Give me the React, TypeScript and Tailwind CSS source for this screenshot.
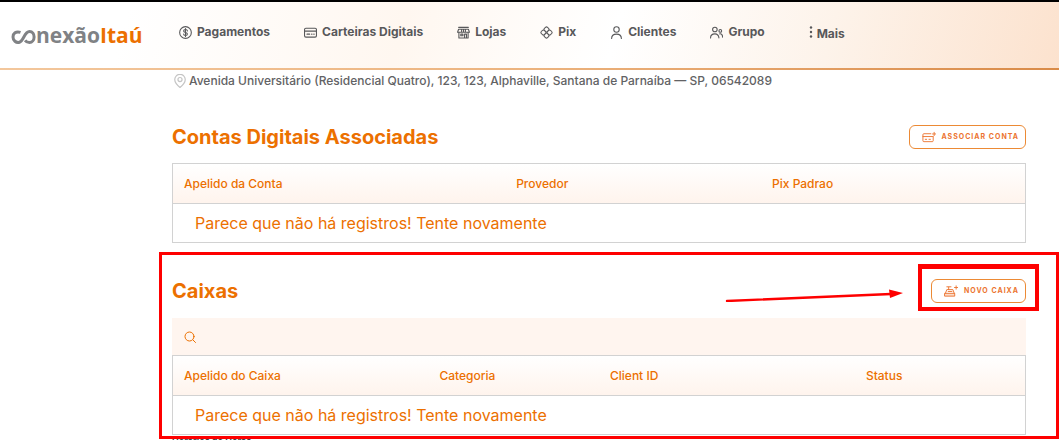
import type { ReactNode } from "react";

type IconProps = { className?: string };

function Svg({ className, children, box = "0 0 24 24" }: IconProps & { children: ReactNode; box?: string }) {
  return (
    <svg
      aria-hidden="true"
      viewBox={box}
      className={className}
      fill="none"
      stroke="currentColor"
      strokeWidth="2"
      strokeLinecap="round"
      strokeLinejoin="round"
    >
      {children}
    </svg>
  );
}

const navIcon = "h-[13px] w-[13px] shrink-0";

const navItems: { label: string; icon: ReactNode }[] = [
  {
    label: "Pagamentos",
    icon: (
      <Svg className={navIcon}>
        <circle cx="12" cy="12" r="10.8" />
        <path d="M15.500 9c0-1.600-1.500-2.500-3.500-2.500S8.500 7.500 8.500 9.200c0 3.900 7 1.700 7 5.600 0 1.700-1.500 2.700-3.500 2.700s-3.500-1-3.500-2.600M12 4.500v15" />
      </Svg>
    ),
  },
  {
    label: "Carteiras Digitais",
    icon: (
      <Svg className={navIcon}>
        <rect x="1" y="4" width="22" height="16.500" rx="2.500" />
        <path d="M1 9.500h22M5.500 15h5M14 15h.8M18 15h.8" />
      </Svg>
    ),
  },
  {
    label: "Lojas",
    icon: (
      <Svg className={navIcon}>
        <path d="M3 2.500h18M3 6h18l2 5.500H1L3 6ZM3.500 11.500v10.500h17V11.500M8.500 6v5M12 6v5M15.500 6v5M7 15h4v3H7zM14 21v-6h3.500v6" />
      </Svg>
    ),
  },
  {
    label: "Pix",
    icon: (
      <Svg className={navIcon}>
        <g strokeWidth="1.900" transform="rotate(45 12 12)">
          <rect x="4" y="4" width="8" height="8" rx="2.600" />
          <rect x="12" y="4" width="8" height="8" rx="2.600" />
          <rect x="4" y="12" width="8" height="8" rx="2.600" />
          <rect x="12" y="12" width="8" height="8" rx="2.600" />
        </g>
      </Svg>
    ),
  },
  {
    label: "Clientes",
    icon: (
      <Svg className={navIcon}>
        <circle cx="12" cy="6.500" r="5" />
        <path d="M3 23c0-5 3.500-8 9-8s9 3 9 8" />
      </Svg>
    ),
  },
  {
    label: "Grupo",
    icon: (
      <Svg className={navIcon}>
        <circle cx="9" cy="6.500" r="4.200" />
        <path d="M1 22c0-5 3-7.500 8-7.500s7 2.500 7.500 7.500" />
        <circle cx="19" cy="9" r="2.500" />
        <path d="M18 14.500c3.500-.5 5.200 2 5.200 6" />
      </Svg>
    ),
  },
];

function Logo() {
  return (
    <a
      href="#"
      aria-label="conexãoItaú"
      className="flex w-[169px] shrink-0 items-center pl-[11px] font-['Open_Sans',sans-serif] text-[21px] leading-7 font-bold"
    >
      <svg aria-hidden="true" viewBox="0 0 25 16" className="mt-1 h-4 w-[25px] shrink-0" fill="none" stroke="#808285" strokeWidth="3">
        <path d="M9.500 3.400C4.800 1.800 2 4.600 2 8s3 6.200 6.500 5.200C12.500 12 13.500 2.600 18.500 2.600c3 0 4.600 2.400 4.600 5.400s-2 5.600-4.600 5.600c-2 0-3.400-.8-4.400-2.200" />
      </svg>
      <span className="text-[#808285]">nexão</span>
      <span className="text-[#ec7000]">Itaú</span>
    </a>
  );
}

function Header() {
  return (
    <header className="border-t-2 border-black">
      <div className="flex h-[66px] items-center bg-[linear-gradient(105deg,#ffffff_12%,#fff7f0_38%,#ffffff_58%,#fdf3ea_78%,#fce2ce_100%)]">
        <Logo />
        <nav className="flex items-center gap-[34px] pb-1.5 pl-2.5 text-xs leading-5 font-bold text-[#58585a]">
          {navItems.map(({ label, icon }) => (
            <a key={label} href="#" className="flex items-center gap-[5px] whitespace-nowrap">
              {icon}
              {label}
            </a>
          ))}
          <a href="#" className="ml-2.5 flex items-center gap-1">
            <svg aria-hidden="true" viewBox="0 0 4 12" className="h-3 w-1" fill="currentColor">
              <circle cx="2" cy="1.500" r="1.200" />
              <circle cx="2" cy="6" r="1.200" />
              <circle cx="2" cy="10.500" r="1.200" />
            </svg>
            <span className="pt-1">Mais</span>
          </a>
        </nav>
      </div>
      <div className="h-0.5 bg-linear-to-r from-[#f3c79c] via-[#ecb37e] to-[#d98b48]" />
    </header>
  );
}

function ActionButton({ icon, children }: { icon: ReactNode; children: ReactNode }) {
  return (
    <button
      type="button"
      className="flex h-6 items-center gap-1.5 rounded-md border border-[#ec8a35] bg-white pr-1.5 pl-3 text-[7px] font-bold tracking-[1px] text-[#ec7430] uppercase"
    >
      {icon}
      {children}
    </button>
  );
}

function EmptyTable({ columns, label }: { columns: { name: string; width: string }[]; label: string }) {
  return (
    <table aria-label={label} className="w-full table-fixed border-collapse border border-[#d2d2d2] text-left text-[#ec7000]">
      <thead>
        <tr className="h-10 border-b border-[#d2d2d2] bg-linear-to-b from-white to-[#fff4ed] text-xs leading-5">
          {columns.map(({ name, width }) => (
            <th key={name} scope="col" className={`${width} pl-[11px] font-medium`}>
              {name}
            </th>
          ))}
        </tr>
      </thead>
      <tbody>
        <tr className="h-[39px] text-base">
          <td colSpan={columns.length} className="pl-[22px]">
            Parece que não há registros! Tente novamente
          </td>
        </tr>
      </tbody>
    </table>
  );
}

export default function App() {
  return (
    <div className="h-screen overflow-hidden bg-white font-[Inter,sans-serif]">
      <Header />
      <main className="pr-[33px] pl-[172px]">
        <p className="flex h-[22px] items-center gap-0.5 text-xs leading-5 font-medium text-[#626264]">
          <Svg className="ml-px h-3.5 w-3.5 shrink-0 text-[#c4c4c4]">
            <path d="M12 23S3 16 3 9.500a9 9 0 0 1 18 0C21 16 12 23 12 23Z" />
            <circle cx="12" cy="9.500" r="3.500" />
          </Svg>
          Avenida Universitário (Residencial Quatro), 123, 123, Alphaville, Santana de Parnaíba — SP, 06542089
        </p>

        <section className="pt-[33px]">
          <div className="mb-3.5 flex h-6 items-center justify-between">
            <h2 className="text-xl font-bold text-[#ec7000]">Contas Digitais Associadas</h2>
            <ActionButton
              icon={
                <Svg className="h-3 w-3.5" box="0 0 30 24">
                  <path d="M19 5H4a2 2 0 0 0-2 2v13a2 2 0 0 0 2 2h18a2 2 0 0 0 2-2v-8M2 11h22M7 17h3M15 17h3M26 2v7M22.500 5.500h7" />
                </Svg>
              }
            >
              Associar conta
            </ActionButton>
          </div>
          <EmptyTable
            label="Contas Digitais Associadas"
            columns={[
              { name: "Apelido da Conta", width: "w-[39%]" },
              { name: "Provedor", width: "w-[30%]" },
              { name: "Pix Padrao", width: "w-[31%]" },
            ]}
          />
        </section>

        <section className="relative mt-2.5 pt-[26px]">
          <div className="mb-[15px] flex h-6 items-center justify-between">
            <h2 className="text-xl font-bold text-[#ec7000]">Caixas</h2>
            <div className="relative">
              <ActionButton
                icon={
                  <Svg className="h-3.5 w-3.5" box="0 0 30 28">
                    <path d="M2 19h21v6H2z" fill="currentColor" fillOpacity="0.25" />
                    <path d="M3 19l3-8h13l3 8M10 11V6M6 5h9M9 15h8M26 3v7M22.500 6.500h7" />
                  </Svg>
                }
              >
                Novo caixa
              </ActionButton>
              <div className="pointer-events-none absolute -top-[15px] -right-[13px] -bottom-2 -left-[13px] border-4 border-t-5 border-[#fe0000]" />
              <svg aria-hidden="true" viewBox="0 0 180 16" className="pointer-events-none absolute top-[7px] right-[122px] h-4 w-[180px]">
                <path d="M3 15 167 8" stroke="#fe0000" strokeWidth="2.400" strokeLinecap="round" />
                <path d="m165 3.500 14 3.500-13 5Z" fill="#fe0000" />
              </svg>
            </div>
          </div>
          <label className="flex h-[37px] items-center gap-2 bg-[#fff5ef] px-3 text-[#ec7000]">
            <Svg className="h-3 w-3 shrink-0">
              <circle cx="11" cy="11" r="9" />
              <path d="m18 18 5 5" />
            </Svg>
            <input type="search" aria-label="Buscar caixas" className="min-w-0 flex-1 bg-transparent text-xs outline-none" />
          </label>
          <EmptyTable
            label="Caixas"
            columns={[
              { name: "Apelido do Caixa", width: "w-[30%]" },
              { name: "Categoria", width: "w-[20%]" },
              { name: "Client ID", width: "w-[30%]" },
              { name: "Status", width: "w-[20%]" },
            ]}
          />
          <div className="pointer-events-none absolute -top-px -right-[33px] -bottom-1 -left-[13px] border-3 border-[#fe0000]" />
        </section>

        <h3 className="text-[9px] leading-3 font-bold text-[#3f3f46]">Horários do Horas</h3>
      </main>
    </div>
  );
}
